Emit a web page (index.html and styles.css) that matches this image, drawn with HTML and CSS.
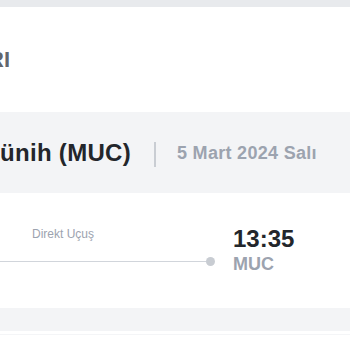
FILE: index.html
```html
<!DOCTYPE html>
<html lang="tr">
<head>
<meta charset="utf-8">
<link rel="stylesheet" href="styles.css">
</head>
<body>
<div class="page">
  <div class="top-band"></div>
  <section class="title-section">
    <div class="title-clip"><h2 class="title">UÇUŞ DETAYLARI</h2></div>
  </section>
  <header class="route-header">
    <div class="route-clip"><span class="route">İstanbul (IST) → Münih (MUC)</span></div>
    <span class="sep"></span>
    <span class="date">5 Mart 2024 Salı</span>
  </header>
  <section class="flight">
    <div class="path">
      <div class="path-label">Direkt Uçuş</div>
      <div class="path-line"><span class="line"></span><span class="dot"></span></div>
    </div>
    <div class="arrival">
      <div class="time">13:35</div>
      <div class="code">MUC</div>
    </div>
  </section>
  <div class="bottom-band"></div>
  <div class="bottom-section"></div>
</div>
</body>
</html>
```
FILE: styles.css
```css
html, body {
  margin: 0;
  padding: 0;
  background: #ffffff;
}
body {
  width: 350px;
  height: 350px;
  overflow: hidden;
  font-family: "Liberation Sans", Arial, sans-serif;
}
.page {
  display: flex;
  flex-direction: column;
}
.top-band {
  height: 7px;
  background: #e8eaed;
}
.title-section {
  height: 105px;
  display: flex;
  align-items: center;
}
.title-clip {
  width: 10px;
  display: flex;
  justify-content: flex-end;
}
.title {
  margin: 0;
  white-space: nowrap;
  font-size: 22px;
  font-weight: 700;
  color: #62666d;
  line-height: 26px;
}
.route-header {
  height: 81px;
  background: #f3f4f6;
  display: flex;
  align-items: center;
}
.route-clip {
  width: 131px;
  flex: none;
  display: flex;
  justify-content: flex-end;
}
.route {
  white-space: nowrap;
  font-size: 24px;
  font-weight: 700;
  color: #23262b;
  line-height: 28px;
  letter-spacing: 0.3px;
}
.sep {
  width: 2px;
  height: 25px;
  background: #c9cdd3;
  margin-left: 23px;
  margin-top: 4px;
}
.date {
  margin-left: 21px;
  font-size: 18px;
  font-weight: 700;
  color: #9ca3af;
  white-space: nowrap;
  margin-top: 2px;
  letter-spacing: 0.3px;
}
.flight {
  height: 115px;
  box-sizing: border-box;
  padding-top: 32px;
  display: flex;
  align-items: flex-start;
}
.path {
  width: 215px;
  padding-top: 2px;
  display: flex;
  flex-direction: column;
}
.path-label {
  padding-left: 32px;
  font-size: 12px;
  line-height: 14px;
  color: #9ca3af;
}
.path-line {
  margin-top: 16px;
  height: 9px;
  display: flex;
  align-items: center;
}
.line {
  flex: 1;
  height: 1.5px;
  background: #d1d5db;
}
.dot {
  width: 9px;
  height: 9px;
  border-radius: 50%;
  background: #c8ccd2;
}
.arrival {
  margin-left: 18px;
}
.time {
  font-size: 24px;
  line-height: 28px;
  font-weight: 700;
  color: #23262b;
}
.code {
  font-size: 18px;
  line-height: 22px;
  font-weight: 700;
  color: #9ca3af;
}
.bottom-band {
  height: 23px;
  background: #f3f4f6;
}
.bottom-section {
  height: 19px;
}
.bottom-section::before {
  content: "";
  display: block;
  height: 1px;
  margin-top: 3px;
  background: #f4f5f7;
}
```
